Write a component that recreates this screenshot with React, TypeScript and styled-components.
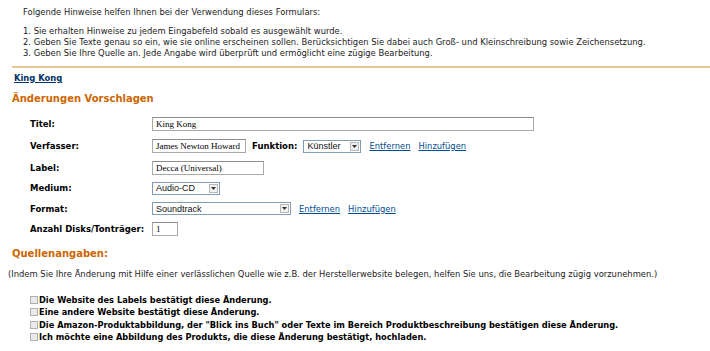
import React from "react";
import styled, { createGlobalStyle } from "styled-components";

const GlobalStyle = createGlobalStyle`
  html, body {
    margin: 0;
    padding: 0;
    background: #fff;
  }
  body {
    font-family: "DejaVu Sans", Verdana, sans-serif;
    font-size: 8.4px;
    color: #000;
  }
`;

const Page = styled.div`
  width: 710px;
  height: 351px;
  overflow: hidden;
`;

const Hints = styled.div`
  padding: 7px 0 0 23px;
  line-height: 11px;
  color: #222;
`;

const HintIntro = styled.p`
  margin: 0 0 8px;
`;

const HintList = styled.ol`
  margin: 0;
  padding: 0;
  list-style: none;
`;

const Rule = styled.hr`
  margin: 7px 0 0 12px;
  border: none;
  height: 2px;
  background: #e9c698;
`;

const Body = styled.div`
  padding: 0 0 0 12px;
`;

const ItemLink = styled.a`
  display: block;
  margin: 5px 0 0 2px;
  line-height: 11px;
  font-weight: bold;
  color: #003366;
  text-decoration: underline;
`;

const Heading = styled.h2<{ $top: number }>`
  margin: ${(p) => p.$top}px 0 0;
  line-height: 12px;
  font-size: 10px;
  font-weight: bold;
  color: #cc6600;
`;

const FormGrid = styled.div`
  display: grid;
  grid-template-columns: 122px 1fr;
  grid-template-rows: 22px 22px 21px 20px 21px 20px;
  margin: 8px 0 0 18px;
  align-items: center;
`;

const Label = styled.span`
  font-weight: bold;
  font-size: 8.5px;
`;

const FieldRow = styled.div`
  display: flex;
  align-items: center;
  gap: 6px;
`;

const TextInput = styled.div<{ $w: number }>`
  box-sizing: border-box;
  width: ${(p) => p.$w}px;
  height: 14px;
  border: 1px solid #a9a9a9;
  border-top-color: #8e8e8e;
  padding: 0 3px;
  font-family: "Liberation Serif", "Times New Roman", serif;
  font-size: 9px;
  line-height: 12px;
  white-space: nowrap;
  overflow: hidden;
`;

const Select = styled.div<{ $w: number }>`
  box-sizing: border-box;
  width: ${(p) => p.$w}px;
  height: 13px;
  border: 1px solid #7f9db9;
  display: flex;
  align-items: center;
  justify-content: space-between;
  padding: 0 1px 0 3px;
  font-family: "Liberation Sans", Arial, sans-serif;
  font-size: 9px;
  color: #111;
`;

const Arrow = styled.span`
  box-sizing: border-box;
  width: 9px;
  height: 9px;
  border: 1px solid #b7b7b7;
  background: #f0f0f0;
  display: flex;
  align-items: center;
  justify-content: center;
`;

const Link = styled.a`
  margin-left: 2px;
  color: #004b91;
  text-decoration: underline;
`;

const Note = styled.p`
  margin: 9px 0 0 -4px;
  line-height: 11px;
  color: #222;
`;

const Checks = styled.div`
  margin: 14px 0 0 18px;
  display: flex;
  flex-direction: column;
`;

const CheckRow = styled.label`
  display: flex;
  align-items: center;
  gap: 1px;
  font-weight: bold;
  font-size: 8.25px;
  height: 12.3px;
`;

const Box = styled.span`
  box-sizing: border-box;
  width: 8px;
  height: 8px;
  border: 1px solid #b0b0b0;
  background: #eaeaea;
`;

const DropArrow = () => (
  <Arrow>
    <svg width="5" height="3" viewBox="0 0 5 3">
      <path d="M0 0 H5 L2.5 3 Z" fill="#333" />
    </svg>
  </Arrow>
);

const App: React.FC = () => {
  return (
    <Page>
      <GlobalStyle />
      <Hints>
        <HintIntro>Folgende Hinweise helfen Ihnen bei der Verwendung dieses Formulars:</HintIntro>
        <HintList>
          <li>1. Sie erhalten Hinweise zu jedem Eingabefeld sobald es ausgewählt wurde.</li>
          <li>2. Geben Sie Texte genau so ein, wie sie online erscheinen sollen. Berücksichtigen Sie dabei auch Groß- und Kleinschreibung sowie Zeichensetzung.</li>
          <li>3. Geben Sie Ihre Quelle an. Jede Angabe wird überprüft und ermöglicht eine zügige Bearbeitung.</li>
        </HintList>
      </Hints>
      <Rule />
      <Body>
        <ItemLink>King Kong</ItemLink>
        <Heading $top={9}>Änderungen Vorschlagen</Heading>
        <FormGrid>
          <Label>Titel:</Label>
          <FieldRow>
            <TextInput $w={382}>King Kong</TextInput>
          </FieldRow>

          <Label>Verfasser:</Label>
          <FieldRow>
            <TextInput $w={94}>James Newton Howard</TextInput>
            <Label>Funktion:</Label>
            <Select $w={58}>
              Künstler
              <DropArrow />
            </Select>
            <Link>Entfernen</Link>
            <Link>Hinzufügen</Link>
          </FieldRow>

          <Label>Label:</Label>
          <FieldRow>
            <TextInput $w={112}>Decca (Universal)</TextInput>
          </FieldRow>

          <Label>Medium:</Label>
          <FieldRow>
            <Select $w={68}>
              Audio-CD
              <DropArrow />
            </Select>
          </FieldRow>

          <Label>Format:</Label>
          <FieldRow>
            <Select $w={139}>
              Soundtrack
              <DropArrow />
            </Select>
            <Link>Entfernen</Link>
            <Link>Hinzufügen</Link>
          </FieldRow>

          <Label>Anzahl Disks/Tonträger:</Label>
          <FieldRow>
            <TextInput $w={26}>1</TextInput>
          </FieldRow>
        </FormGrid>
        <Heading $top={9}>Quellenangaben:</Heading>
        <Note>
          (Indem Sie Ihre Änderung mit Hilfe einer verlässlichen Quelle wie z.B. der Herstellerwebsite belegen, helfen Sie uns, die Bearbeitung zügig vorzunehmen.)
        </Note>
        <Checks>
          <CheckRow><Box />Die Website des Labels bestätigt diese Änderung.</CheckRow>
          <CheckRow><Box />Eine andere Website bestätigt diese Änderung.</CheckRow>
          <CheckRow><Box />Die Amazon-Produktabbildung, der "Blick ins Buch" oder Texte im Bereich Produktbeschreibung bestätigen diese Änderung.</CheckRow>
          <CheckRow><Box />Ich möchte eine Abbildung des Produkts, die diese Änderung bestätigt, hochladen.</CheckRow>
        </Checks>
      </Body>
    </Page>
  );
};

export default App;
